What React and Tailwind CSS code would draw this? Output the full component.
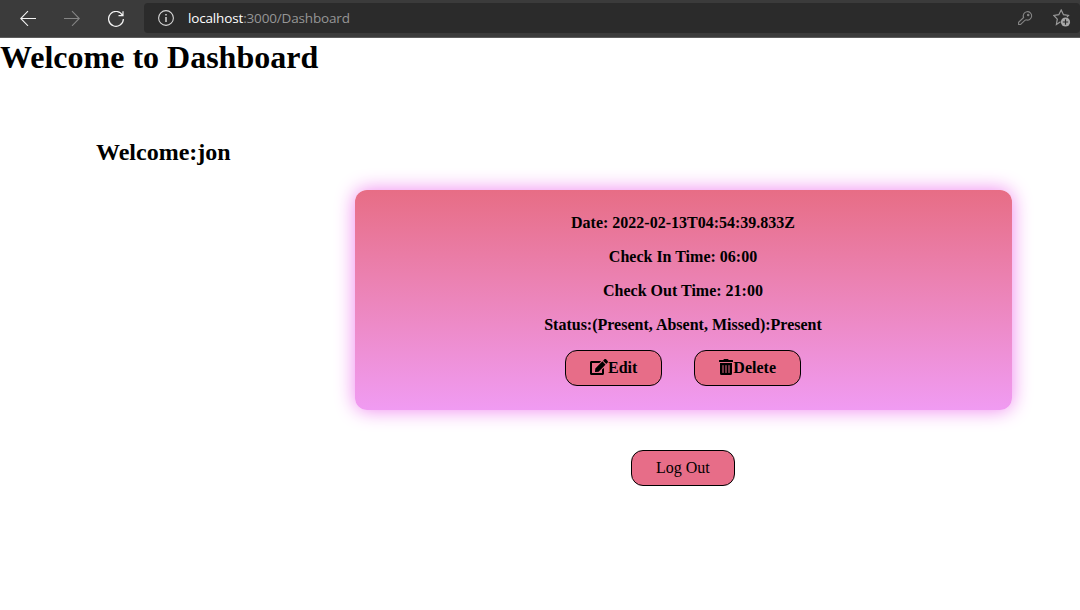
import { FaEdit, FaTrashAlt } from "react-icons/fa";

const records = [
  {
    date: "2022-02-13T04:54:39.833Z",
    checkIn: "06:00",
    checkOut: "21:00",
    status: "Present",
  },
];

function BrowserBar() {
  return (
    <header className="flex h-[38px] items-center border-b border-[#5c5c5c] bg-[#3b3b3b] pl-5 font-['Open_Sans',sans-serif]">
      <svg className="mb-0.5 h-4 w-4 shrink-0" viewBox="0 0 16 16" fill="none" stroke="#f4f4f4" strokeWidth="1.1">
        <path d="M16 8.5H.8M8 1.2.7 8.5 8 15.8" />
      </svg>
      <svg className="mb-0.5 ml-7 h-4 w-4 shrink-0" viewBox="0 0 16 16" fill="none" stroke="#858585" strokeWidth="1.1">
        <path d="M0 8.5h15.2M8 1.2 15.3 8.5 8 15.8" />
      </svg>
      <svg className="ml-7 h-4 w-4 shrink-0" viewBox="0 0 16 16" fill="none" stroke="#f4f4f4" strokeWidth="1.2">
        <path d="M14.6 4.5A7.4 7.4 0 1 0 15.4 8M15 .2v4.4h-4.5" />
      </svg>
      <div className="mb-px ml-5 flex h-[30px] min-w-0 flex-1 items-center rounded bg-[#2b2b2b] pl-3.5">
        <svg className="h-4 w-4 shrink-0" viewBox="0 0 16 16" fill="none" stroke="#d6d6d6">
          <circle cx="8" cy="8" r="7.4" strokeWidth="1.1" />
          <path d="M8 7v5M8 4v1.6" strokeWidth="1.5" />
        </svg>
        <p className="mb-px ml-3.5 text-[13.5px] leading-5 tracking-[-0.16px] text-[#969696]">
          <span className="text-white">localhost</span>:3000/Dashboard
        </p>
        <svg className="ml-auto h-4 w-4 shrink-0" viewBox="0 0 16 16" fill="none" stroke="#858585" strokeWidth="1.1">
          <path d="M6.6 7.5A4.2 4.2 0 1 1 9 9.8L7.6 10.6 3.6 14.5H1.6v-2.2z" />
          <circle cx="11.2" cy="4.9" r=".7" />
        </svg>
        <svg className="mr-[9px] ml-5 h-[18px] w-[18px] shrink-0" viewBox="0 0 18 18" fill="none">
          <path d="M7.5 12.8 3.4 15.5 4.3 10.2.8 6.5l5-.8L8.2 1l2.3 4.7 5 .8-1.5 1.7" stroke="#9a9a9a" strokeWidth="1.2" />
          <circle cx="12.5" cy="13" r="4.6" fill="#a8a8a8" />
          <path d="M12.5 10.3v5.4M9.8 13h5.4" stroke="#2b2b2b" strokeWidth="1.2" />
        </svg>
      </div>
    </header>
  );
}

function ActionButton({ children, bold }) {
  return (
    <button
      className={
        "flex h-9 items-center rounded-xl border border-black bg-[#e76d88] px-6 leading-[18px] " +
        (bold ? "font-bold" : "mr-px min-w-[104px] font-normal")
      }
    >
      {children}
    </button>
  );
}

function AttendanceCard({ record }) {
  return (
    <article className="flex h-[220px] w-[657px] flex-col items-center rounded-xl bg-linear-to-b from-[#e76d85] to-[#f09bf2] pt-6 pr-px font-bold shadow-[0_0_20px_violet]">
      <div className="flex flex-col items-center gap-4 leading-[18px]">
        <p>Date: {record.date}</p>
        <p>Check In Time: {record.checkIn}</p>
        <p>Check Out Time: {record.checkOut}</p>
        <p>Status:(Present, Absent, Missed):{record.status}</p>
      </div>
      <div className="mt-4 flex gap-8">
        <ActionButton bold>
          <FaEdit className="mb-0.5 h-4 w-[18px]" />
          Edit
        </ActionButton>
        <ActionButton bold>
          <FaTrashAlt className="mb-0.5 h-4 w-[14px]" />
          Delete
        </ActionButton>
      </div>
    </article>
  );
}

export default function App() {
  return (
    <div className="h-[610px] overflow-hidden bg-white font-['Liberation_Serif',serif] text-base text-black">
      <BrowserBar />
      <main>
        <h1 className="pt-px text-[32px] leading-[37px] font-bold">Welcome to Dashboard</h1>
        <h2 className="mt-[62px] ml-24 text-2xl leading-7 font-bold">Welcome:jon</h2>
        <section className="mt-6 ml-[355px] flex w-[657px] flex-col items-center gap-10">
          {records.map((record) => (
            <AttendanceCard key={record.date} record={record} />
          ))}
          <ActionButton>Log Out</ActionButton>
        </section>
      </main>
    </div>
  );
}
